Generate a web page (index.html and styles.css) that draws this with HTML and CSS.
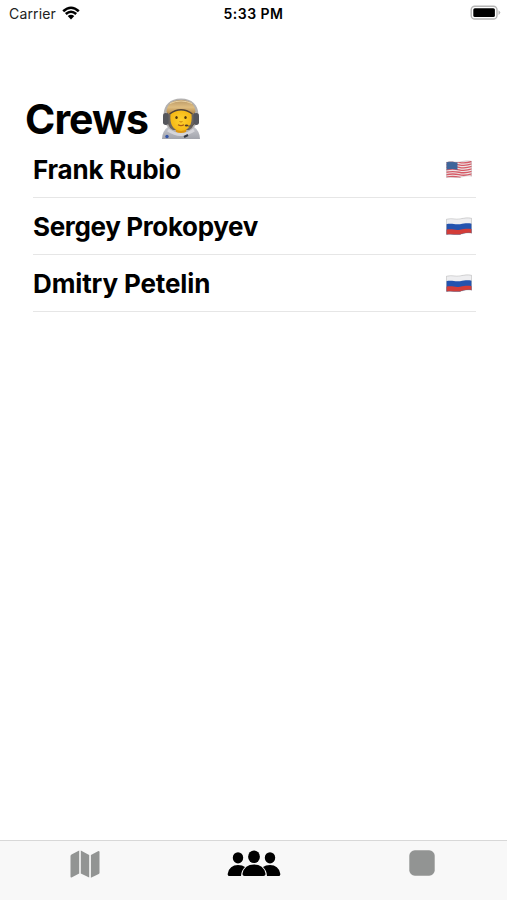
FILE: index.html
```html
<!DOCTYPE html>
<html lang="en">
<head>
<meta charset="utf-8">
<meta name="viewport" content="width=device-width">
<title>Crews</title>
<link rel="stylesheet" href="styles.css">
</head>
<body>
<div class="screen">
  <header class="status">
    <div class="carrier"><span>Carrier</span>
      <svg class="wifi" width="20" height="16" viewBox="0 0 20 16"><path d="M2.2 6.2Q10-.7 17.8 6.2M4.8 9Q10 4.5 15.2 9" fill="none" stroke="#000" stroke-width="2.6"/><path d="M6.7 11.1Q10 8.2 13.3 11.1L10 14.5Z"/></svg>
    </div>
    <div class="time">5:33 PM</div>
    <svg class="battery" width="31" height="16" viewBox="0 0 31 16"><rect x="1.2" y="1.2" width="25.8" height="12.8" rx="3.6" fill="#fff" stroke="#b5b5b5" stroke-width="1.4"/><rect x="3.3" y="3.2" width="21.6" height="8.8" rx="1.6"/><path d="M28.5 5.2Q32 7.6 28.5 10Z" fill="#b5b5b5"/></svg>
  </header>
  <main class="content">
    <h1 class="title"><span>Crews</span>
      <svg class="astronaut" width="40" height="42" viewBox="0 0 40 42">
        <defs>
          <linearGradient id="suit" x2="0" y2="1"><stop stop-color="#c9cad0"/><stop offset="1" stop-color="#a2a4ac"/></linearGradient>
          <linearGradient id="visor" x2="0" y2="1"><stop stop-color="#b89867"/><stop offset=".5" stop-color="#dfbd80"/><stop offset="1" stop-color="#ad813f"/></linearGradient>
          <radialGradient id="face"><stop stop-color="#ffd22e"/><stop offset="1" stop-color="#f5b816"/></radialGradient>
        </defs>
        <path d="M1 41Q1 33 8 28L32 28Q39 33 39 41Z" fill="url(#suit)"/>
        <path d="M20 .4C9 .4 3 7 2.600 16C2.500 28 10 35 20 35S37.500 28 37.400 16C37 7 31 .4 20 .4Z" fill="#b3b1b0"/>
        <path d="M6 15Q8 5 20 5T34 15Q35 29 28 32L12 32Q5 29 6 15Z" fill="#6b6561"/>
        <path d="M14 28H26L25 34Q20 37 15 34Z" fill="#dc9611"/>
        <path d="M9.500 16Q20 7 30.500 16Q32 32 20 33Q8 32 9.500 16Z" fill="url(#face)"/>
        <path d="M5.500 14C6 6 11 2 20 2S34 6 34.500 14L31.500 16.500Q20 8 8.500 16.500Z" fill="url(#visor)"/>
        <path d="M9 5.500Q20 .5 31 5.500" fill="none" stroke="#e9d2a4" stroke-width="1"/>
        <path d="M8.500 16Q20 7.500 31.500 16" fill="none" stroke="#504336" stroke-width="1.300"/>
        <rect x="2" y="15" width="5.500" height="12" rx="2.700" fill="#55565c"/><rect x="32.500" y="15" width="5.500" height="12" rx="2.700" fill="#55565c"/>
        <ellipse cx="15.500" cy="19.500" rx="1.200" ry="1.500" fill="#51360c"/><ellipse cx="24.500" cy="19.500" rx="1.200" ry="1.500" fill="#51360c"/>
        <path d="M18.500 23.500Q20 24.600 21.500 23.500" fill="none" stroke="#c47d0b"/><path d="M17 26.800Q20 28.500 23 26.800" fill="none" stroke="#ab5b17" stroke-width="1.200"/>
        <path d="M34 25Q31 29.500 27 28" fill="none" stroke="#5d554b" stroke-width="1"/><ellipse cx="25.500" cy="27.500" rx="1.700" ry="1.100" fill="#4b3a2c"/>
        <path d="M7 32Q20 41 33 32" fill="none" stroke="#d5d5da" stroke-width="3"/>
        <circle cx="6" cy="38.500" r="1.700" fill="#3455a7"/><path d="M23 39L27 37" stroke="#333842" stroke-width="2"/>
      </svg>
    </h1>
    <ul class="crew">
      <li class="member"><span class="name frank">Frank Rubio</span>
        <svg class="flag" width="26" height="19" viewBox="0 0 26 20" preserveAspectRatio="none">
          <defs><clipPath id="wave"><path id="wave-shape" d="M.5 2.300C7 .8 9 3 14 2S21 .5 25.500 1.300V17C20 16 18 17.500 14 18.300S6 17.500 .5 18.500Z"/></clipPath></defs>
          <g clip-path="url(#wave)"><path fill="#eee5e6" d="M0 0H26V20H0Z"/><path d="M0 2.500Q7 1 13 2.500T26 1.500M0 5.100Q7 3.600 13 5.100T26 4.100M0 7.700Q7 6.200 13 7.700T26 6.700M0 10.300Q7 8.800 13 10.300T26 9.300M0 12.900Q7 11.400 13 12.900T26 11.900M0 15.500Q7 14 13 15.500T26 14.500M0 18.100Q7 16.600 13 18.100T26 17.100" fill="none" stroke="#d65b67" stroke-width="1.400"/><path fill="#3f659b" d="M0 0H11.500V10.200Q6 8.800 0 10.300Z"/></g><use href="#wave-shape" fill="none" stroke="#8c737b" stroke-opacity=".35" stroke-width=".7"/>
        </svg>
      </li>
      <li class="member"><span class="name sergey">Sergey Prokopyev</span>
        <svg class="flag" width="26" height="19" viewBox="0 0 26 20" preserveAspectRatio="none"><g id="russia"><g clip-path="url(#wave)"><path fill="#eeeef0" d="M0 0H26V20H0Z"/><path fill="#2353af" d="M0 7.700C6 6.200 9 8.500 14 7.500S21 6 26 7V20H0Z"/><path fill="#d33c38" d="M0 13.500C6 12 9 14.300 14 13.300S21 11.800 26 12.800V20H0Z"/></g><use href="#wave-shape" fill="none" stroke="#777" stroke-opacity=".4" stroke-width=".7"/></g></svg>
      </li>
      <li class="member"><span class="name dmitry">Dmitry Petelin</span>
        <svg class="flag" width="26" height="19" viewBox="0 0 26 20" preserveAspectRatio="none"><use href="#russia"/></svg>
      </li>
    </ul>
  </main>
  <nav class="tabs">
    <a class="tab"><svg width="30" height="29" viewBox="0 0 30 29" fill="#929493"><path d="M.5 6Q.5 5 1.500 4.500L9.200 .5V23.500L2 27.200Q.5 28 .5 26.500Z"/><path d="M10.800 .5L19.200 5V27.500L10.800 23.500Z"/><path d="M20.900 5L28 1.200Q29.500 .7 29.500 2.200V22.500Q29.500 23.500 28.700 24L20.900 27.700Z"/></svg></a>
    <a class="tab"><svg width="54" height="28" viewBox="0 0 54 28"><ellipse cx="11" cy="7.800" rx="5.200" ry="5.600"/><ellipse cx="43" cy="7.800" rx="5.200" ry="5.600"/><path d="M2.500 26Q.2 26 .8 23.500Q2.500 15 11 15Q15.500 15 18 17Q14.200 20.500 14 26ZM51.500 26Q53.800 26 53.200 23.500Q51.500 15 43 15Q38.500 15 36 17Q39.800 20.500 40 26Z"/><ellipse cx="27" cy="6.700" rx="5.900" ry="6.300"/><path d="M17.500 26Q15 26 15.600 23.300Q17.500 14.400 27 14.400T38.400 23.300Q39 26 36.500 26Z"/></svg></a>
    <a class="tab"><svg width="26" height="26" viewBox="0 0 26 26"><rect x=".3" y=".3" width="25.400" height="25.400" rx="5.500" fill="#929493"/></svg></a>
  </nav>
</div>
</body>
</html>
```
FILE: styles.css
```css
* { box-sizing: border-box; }
body { margin: 0; background: #fff; color: #000; font-family: Inter, "Liberation Sans", sans-serif; }
.screen { height: 900px; display: flex; flex-direction: column; }
.status { height: 28px; display: grid; grid-template-columns: 1fr auto 1fr; padding: 0 6px 0 9px; font-size: 14px; line-height: 27px; }
.carrier { display: flex; color: #222; letter-spacing: .15px; }
.wifi { margin: 5px 0 0 5px; }
.time { font-weight: 600; letter-spacing: .5px; margin-left: -3px; }
.battery { justify-self: end; margin-top: 5px; }
.content { flex: 1; padding: 64px 31px 0 33px; }
.title { display: flex; align-items: center; height: 49px; margin: 0 0 0 -8px; font-size: 41px; font-weight: 700; line-height: 49px; letter-spacing: -.95px; }
.title span { padding-top: 5px; }
.astronaut { margin: 5px 0 0 13px; }
.crew { margin: 0; padding: 0; list-style: none; }
.member { height: 57px; display: flex; align-items: center; justify-content: space-between; border-bottom: 1px solid #e6e6e6; padding-right: 4px; }
.name { padding-top: 1px; font-size: 26px; font-weight: 700; line-height: 32px; }
.frank { letter-spacing: -.2px; }
.sergey { letter-spacing: -.35px; }
.dmitry { letter-spacing: -.13px; }
.flag { display: block; }
.tabs { height: 60px; display: grid; grid-template-columns: repeat(3, 1fr); border-top: 1px solid #d8d8d8; background: #f8f8f8; }
.tab { display: flex; justify-content: center; padding-top: 9px; }
.tab:last-child { padding-right: 1px; }
```
